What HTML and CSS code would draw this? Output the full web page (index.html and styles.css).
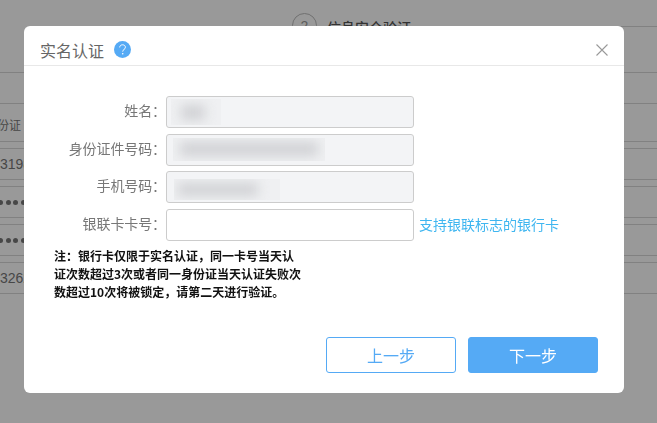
FILE: index.html
```html
<!DOCTYPE html>
<html lang="zh-CN">
<head>
<meta charset="utf-8">
<title>实名认证</title>
<link rel="stylesheet" href="styles.css">
</head>
<body>
<main class="page">
  <div class="steps">
    <span class="step-num">2</span>
    <span class="step-name">信息安全验证</span>
    <span class="step-rule"></span>
  </div>
  <div class="section-head"></div>
  <div class="table">
    <div class="row row-head"><span class="cell-head">身份证</span></div>
    <div class="row"><span class="cell">3198</span></div>
    <div class="row"><span class="cell-dots"><i></i><i></i><i></i><i></i><i></i></span></div>
    <div class="row"><span class="cell-dots"><i></i><i></i><i></i><i></i><i></i></span></div>
    <div class="row"><span class="cell">3262</span></div>
  </div>
</main>
<div class="overlay">
  <section class="modal">
    <header class="modal-head">
      <h2 class="modal-title">实名认证</h2>
      <svg class="help" width="17" height="17" viewBox="0 0 17 17" aria-hidden="true">
        <circle cx="8.5" cy="8.5" r="8.5" fill="#55aaf5"/>
        <path d="M5.7 6.4C5.8 4.7 7 3.8 8.6 3.8c1.600 0 2.800 1 2.800 2.400 0 1.100-.6 1.700-1.400 2.300-.8.6-1.300 1-1.300 2.100" fill="none" stroke="#fff" stroke-width="1"/>
        <circle cx="8.700" cy="12.800" r=".8" fill="#fff"/>
      </svg>
      <svg class="close" width="12" height="12" viewBox="0 0 12 12" aria-hidden="true">
        <path d="M.5.500l11 11M11.500.500l-11 11" stroke="#999" stroke-width="1.100" fill="none"/>
      </svg>
    </header>
    <form class="form">
      <div class="field">
        <label class="label">姓名：</label>
        <div class="input input-off"><div class="mask mask-name"><span class="smear smear-name"></span></div></div>
      </div>
      <div class="field">
        <label class="label">身份证件号码：</label>
        <div class="input input-off"><div class="mask mask-id"><span class="smear smear-id"></span></div></div>
      </div>
      <div class="field">
        <label class="label">手机号码：</label>
        <div class="input input-off"><div class="mask mask-phone"><span class="smear smear-phone"></span></div></div>
      </div>
      <div class="field">
        <label class="label">银联卡卡号：</label>
        <div class="input"></div>
        <a class="hint">支持银联标志的银行卡</a>
      </div>
      <p class="note">注：银行卡仅限于实名认证，同一卡号当天认证次数超过3次或者同一身份证当天认证失败次数超过10次将被锁定，请第二天进行验证。</p>
    </form>
    <footer class="actions">
      <button class="btn btn-ghost" type="button">上一步</button>
      <button class="btn btn-solid" type="button">下一步</button>
    </footer>
  </section>
</div>
</body>
</html>
```
FILE: styles.css
```css
* { box-sizing: border-box; }
html, body { margin: 0; height: 100%; overflow: hidden; }
body {
  background: #fff;
  font-family: "Noto Sans CJK SC", "Liberation Sans", sans-serif;
  color: #666;
}
.page { height: 423px; overflow: hidden; }
.steps {
  height: 72px;
  padding: 13px 0 0 292px;
  display: flex;
  align-items: flex-start;
  gap: 10px;
}
.step-num {
  width: 25px; height: 25px;
  border: 1px solid #bbb;
  border-radius: 50%;
  display: flex; align-items: center; justify-content: center;
  font: 14px/1 "Liberation Sans", sans-serif;
  color: #999;
  flex: none;
}
.step-name { font-size: 14px; line-height: 28px; font-weight: 500; color: #555; }
.step-rule { flex: 1; margin-top: 13px; border-top: 1px solid #d8d8d8; }
.section-head { height: 32px; border-top: 1px solid #d8d8d8; border-bottom: 1px solid #d8d8d8; }
.table { display: flex; flex-direction: column; gap: 6px; margin-top: -1px; }
.row {
  height: 32px;
  border-top: 1px solid #d8d8d8;
  border-bottom: 1px solid #d8d8d8;
  display: flex;
  align-items: center;
  font: 14px/1 "Liberation Sans", sans-serif;
  color: #777;
  white-space: nowrap;
}
.row-head { height: 39px; border-top: 0; padding-top: 6px; }
.cell-head { font: 12px/1 "Noto Sans CJK SC", sans-serif; margin-left: -15px; }
.cell { margin-top: -1px; }
.cell-dots { display: flex; gap: 2.700px; margin-left: -2px; }
.cell-dots i { width: 5px; height: 5px; border-radius: 50%; background: #777; }

.overlay {
  position: fixed;
  inset: 0;
  background: rgba(0, 0, 0, .4);
  padding: 26px 0 0 24px;
}
.modal {
  width: 600px;
  height: 367px;
  background: #fff;
  border-radius: 6px;
  display: flex;
  flex-direction: column;
}
.modal-head {
  height: 40px;
  border-bottom: 1px solid #e8e8e8;
  display: flex;
  align-items: center;
  padding: 8px 16px 0;
  flex: none;
}
.modal-title { margin: 0; font-size: 16px; font-weight: 400; line-height: 24px; color: #666; }
.help { margin-left: 10px; flex: none; }
.close { margin-left: auto; flex: none; }
.form { padding: 30px 0 0 30px; flex: 1; }
.field {
  height: 37.500px;
  display: flex;
  align-items: flex-start;
}
.label {
  width: 112px;
  height: 32px;
  line-height: 28px;
  text-align: right;
  font-size: 14px;
  color: #777;
  white-space: nowrap;
  letter-spacing: -.1px;
  flex: none;
}
.input {
  width: 248px;
  height: 32px;
  border: 1px solid #ccc;
  border-radius: 3px;
  background: #fff;
  flex: none;
  display: flex;
  align-items: flex-start;
}
.input-off { background: #f3f4f6; }
.mask { overflow: hidden; background: #eff0f2; display: flex; align-items: center; }
.mask-name { width: 50px; height: 26px; margin: 2px 0 0 4px; }
.mask-id { width: 152px; height: 23px; margin: 3px 0 0 6px; }
.mask-phone { width: 106px; height: 21px; margin: 7px 0 0 7px; }
.smear { display: block; background: #d0d1d4; filter: blur(6px); }
.smear-name { width: 24px; height: 15px; margin-left: 10px; }
.smear-id { width: 138px; height: 14px; margin-left: 7px; }
.smear-phone { width: 80px; height: 13px; margin-left: 4px; }
.hint { margin-left: 5px; font-size: 14px; line-height: 30px; color: #3fb6f0; white-space: nowrap; }
.note {
  margin: 1px 0 0;
  width: 250px;
  font-size: 12px;
  line-height: 18px;
  font-weight: 700;
  color: #111;
}
.actions {
  flex: none;
  display: flex;
  justify-content: flex-end;
  gap: 12px;
  padding: 0 26px 20px 0;
}
.btn {
  width: 130px;
  height: 36px;
  border-radius: 3px;
  font: 16px/1 "Noto Sans CJK SC", sans-serif;
  border: 1px solid #55aaf5;
  padding: 0;
}
.btn-ghost { background: #fff; color: #55aaf5; }
.btn-solid { background: #55aaf5; color: #fff; }
```
